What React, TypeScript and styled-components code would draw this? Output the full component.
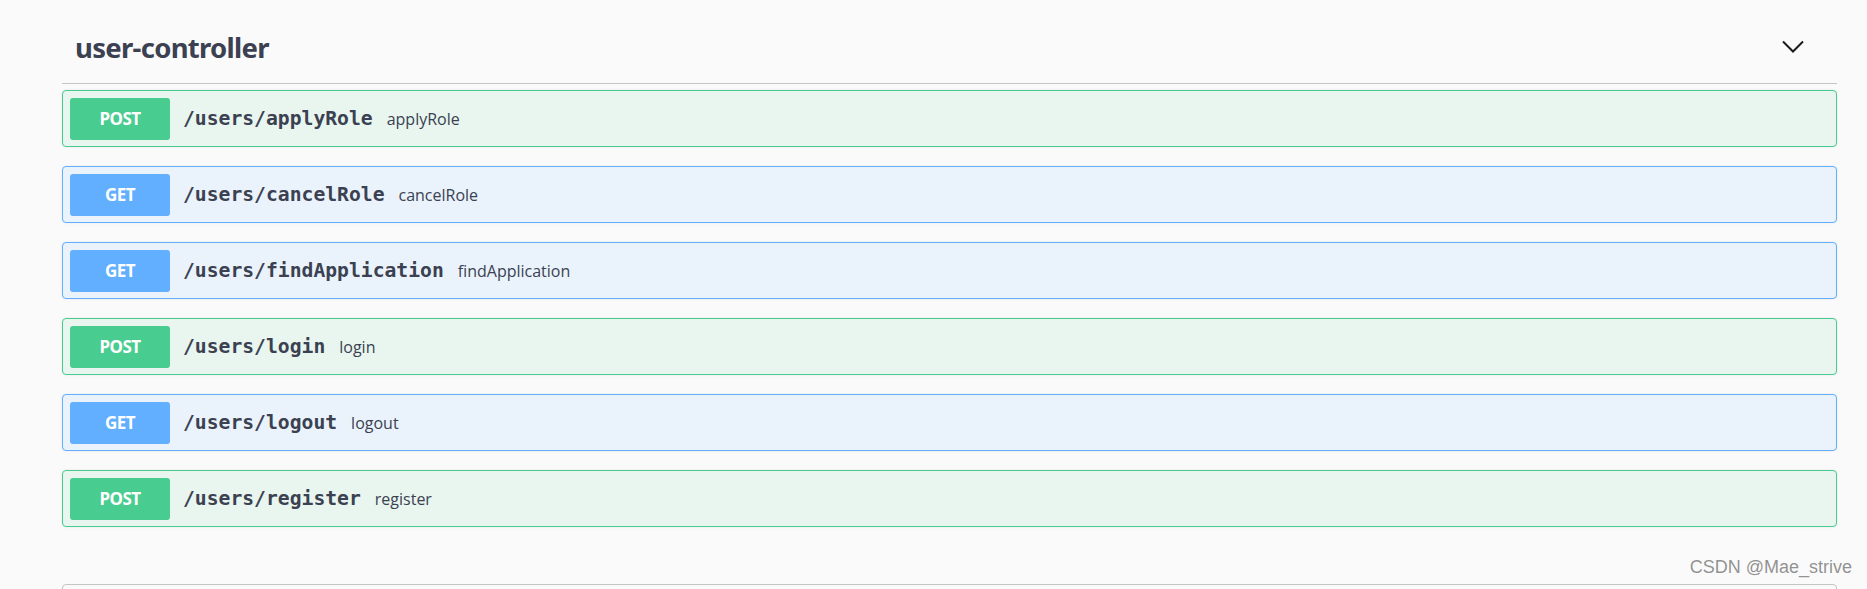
import React from 'react';
import styled, { createGlobalStyle } from 'styled-components';

const GlobalStyle = createGlobalStyle`
  html, body {
    margin: 0;
    padding: 0;
    background: #fafafa;
    overflow: hidden;
  }
`;

const methodColors = {
  POST: { main: '#49cc90', bg: '#e8f6ef' },
  GET: { main: '#61affe', bg: '#eaf3fc' },
};

type Method = keyof typeof methodColors;

const Page = styled.div`
  position: relative;
  height: 589px;
  overflow: hidden;
  padding: 0 30px 0 62px;
  box-sizing: border-box;
  font-family: 'Open Sans', sans-serif;
  color: #3b4151;
`;

const TagHeader = styled.div`
  display: flex;
  align-items: center;
  justify-content: space-between;
  height: 84px;
  box-sizing: border-box;
  padding: 12px 33px 0 13px;
  border-bottom: 1px solid #c6c6c8;
`;

const TagTitle = styled.h3`
  margin: 0;
  font-family: 'Noto Sans', sans-serif;
  font-size: 27.5px;
  font-weight: 700;
  letter-spacing: -0.7px;
  color: #3b4151;
`;

const Arrow = styled.svg`
  width: 22px;
  height: 13px;
  margin-top: -2px;
`;

const OpList = styled.div`
  display: flex;
  flex-direction: column;
  gap: 19px;
  padding-top: 6px;
`;

const OpBlock = styled.div<{ $method: Method }>`
  display: flex;
  align-items: center;
  height: 57px;
  box-sizing: border-box;
  padding: 0 7px;
  border: 1px solid ${p => methodColors[p.$method].main};
  border-radius: 4px;
  background: ${p => methodColors[p.$method].bg};
  box-shadow: 0 0 3px rgba(0, 0, 0, 0.08);
`;

const MethodBadge = styled.span<{ $method: Method }>`
  display: flex;
  align-items: center;
  justify-content: center;
  width: 100px;
  height: 42px;
  border-radius: 3px;
  background: ${p => methodColors[p.$method].main};
  color: #fff;
  font-family: 'Noto Sans', sans-serif;
  font-size: 17px;
  font-weight: 700;
  letter-spacing: -0.6px;
`;

const Path = styled.span`
  margin-left: 13px;
  font-family: 'DejaVu Sans Mono', monospace;
  font-size: 19.7px;
  font-weight: 700;
  color: #3b4151;
`;

const Description = styled.span`
  margin-left: 14px;
  font-family: 'Open Sans', sans-serif;
  font-size: 16px;
  color: #3b4151;
`;

const NextSection = styled.div`
  margin-top: 57px;
  height: 40px;
  border: 1px solid #c4c4c4;
  border-radius: 4px;
`;

const Watermark = styled.span`
  position: absolute;
  right: 15px;
  top: 557px;
  font-family: 'Liberation Sans', Arial, sans-serif;
  font-size: 18px;
  color: rgba(110, 110, 110, 0.75);
`;

const operations: { method: Method; path: string; summary: string }[] = [
  { method: 'POST', path: '/users/applyRole', summary: 'applyRole' },
  { method: 'GET', path: '/users/cancelRole', summary: 'cancelRole' },
  { method: 'GET', path: '/users/findApplication', summary: 'findApplication' },
  { method: 'POST', path: '/users/login', summary: 'login' },
  { method: 'GET', path: '/users/logout', summary: 'logout' },
  { method: 'POST', path: '/users/register', summary: 'register' },
];

const App: React.FC = () => {
  return (
    <Page>
      <GlobalStyle />
      <TagHeader>
        <TagTitle>user-controller</TagTitle>
        <Arrow viewBox="0 0 22 13" fill="none">
          <path d="M1 1.5 L11 11.5 L21 1.5" stroke="#1a1a1a" strokeWidth="2" />
        </Arrow>
      </TagHeader>
      <OpList>
        {operations.map(op => (
          <OpBlock key={op.path} $method={op.method}>
            <MethodBadge $method={op.method}>{op.method}</MethodBadge>
            <Path>{op.path}</Path>
            <Description>{op.summary}</Description>
          </OpBlock>
        ))}
      </OpList>
      <NextSection />
      <Watermark>CSDN @Mae_strive</Watermark>
    </Page>
  );
};

export default App;
